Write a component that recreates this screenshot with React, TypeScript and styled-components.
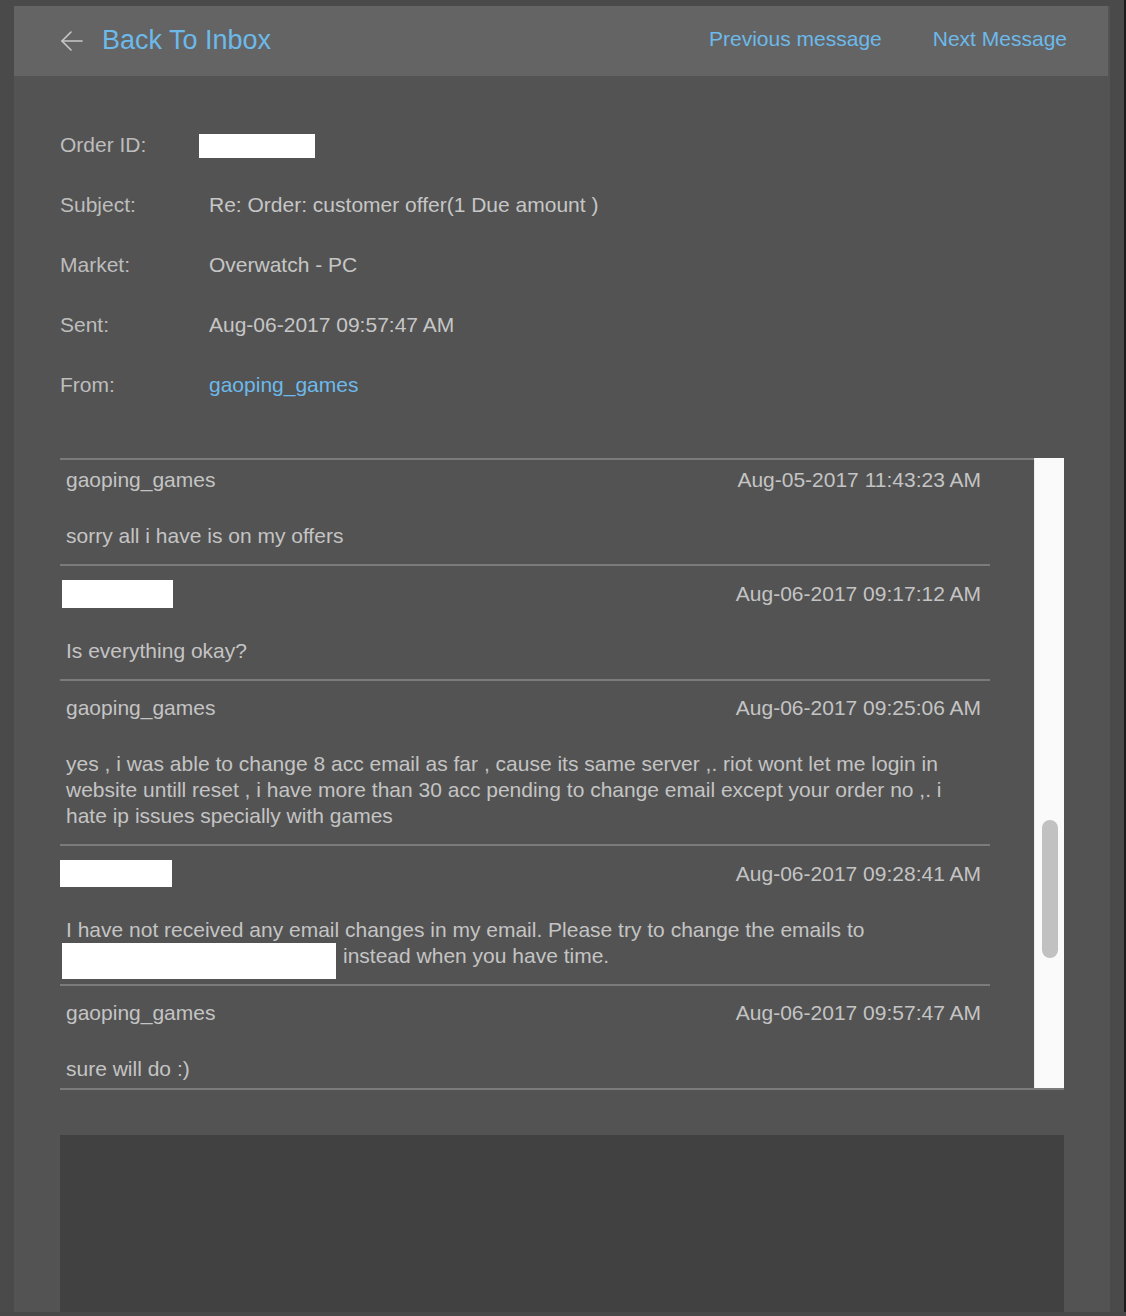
import React from "react";
import styled, { createGlobalStyle } from "styled-components";

const GlobalStyle = createGlobalStyle`
  html, body {
    margin: 0;
    padding: 0;
    background: #484848;
    overflow: hidden;
  }
  body {
    font-family: "Liberation Sans", Arial, Helvetica, sans-serif;
  }
`;

const Page = styled.div`
  height: 1312px;
  overflow: hidden;
  padding: 6px 14px 0 14px;
  border-right: 2px solid #1c1c1c;
  background: #4a4a4a;
  box-sizing: border-box;
`;

const Panel = styled.div`
  width: 1096px;
  min-height: 1400px;
  background: #535353;
`;

const TopBar = styled.div`
  height: 70px;
  margin-right: 2px;
  background: #646464;
  display: flex;
  align-items: center;
  padding: 0 41px 0 46px;
`;

const BackLink = styled.a`
  display: flex;
  align-items: center;
  gap: 18px;
  color: #6db9ea;
  font-size: 27px;
  text-decoration: none;
  cursor: pointer;
  padding-bottom: 1px;
`;

const NavLinks = styled.div`
  margin-left: auto;
  display: flex;
  gap: 51px;
  padding-bottom: 4px;
`;

const NavLink = styled.a`
  color: #6db9ea;
  font-size: 21px;
  cursor: pointer;
`;

const Body = styled.div`
  padding: 39px 46px 0 46px;
`;

const Details = styled.div`
  display: grid;
  grid-template-columns: 149px 1fr;
  grid-auto-rows: 60px;
  align-items: center;
  font-size: 21px;
`;

const Label = styled.div`
  color: #bdbdbd;
`;

const Value = styled.div<{ $link?: boolean }>`
  color: ${(p) => (p.$link ? "#6db9ea" : "#c6c6c6")};
`;

const Redacted = styled.span<{ $w: number; $h: number; $shift?: number }>`
  display: inline-block;
  width: ${(p) => p.$w}px;
  height: ${(p) => p.$h}px;
  margin-left: ${(p) => p.$shift || 0}px;
  background: #ffffff;
  vertical-align: middle;
`;

const InlineRedacted = styled.span`
  display: inline-block;
  width: 274px;
  height: 36px;
  margin: 0 7px -16px -4px;
  background: #ffffff;
`;

const Thread = styled.div`
  margin-top: 43px;
  display: flex;
  border-bottom: 2px solid #7b7b7b;
`;

const MessageColumn = styled.div`
  flex: 1;
  border-top: 2px solid #7b7b7b;
`;

const Viewport = styled.div`
  height: 628px;
  overflow: hidden;
`;

const Scrolled = styled.div<{ $offset: number }>`
  margin-top: -${(p) => p.$offset}px;
`;

const Message = styled.div`
  margin-right: 44px;
  padding: 14px 9px 15px 6px;
  border-bottom: 2px solid #7b7b7b;
  color: #c4c4c4;
  font-size: 21px;
  line-height: 26px;
`;

const MessageHead = styled.div`
  display: flex;
  justify-content: space-between;
  align-items: center;
  min-height: 26px;
`;

const MessageText = styled.div`
  margin-top: 30px;
  padding-right: 30px;
`;

const ScrollTrack = styled.div`
  width: 30px;
  height: 630px;
  background: #fafafa;
  border-left: 1px solid #ececec;
  box-sizing: border-box;
  display: flex;
  justify-content: center;
`;

const ScrollThumb = styled.div`
  width: 16px;
  height: 138px;
  margin-top: 362px;
  border-radius: 8px;
  background: #c1c1c1;
`;

const ReplyBox = styled.div`
  margin-top: 45px;
  height: 240px;
  background: #414141;
`;

const ArrowLeft = () => (
  <svg width="24" height="24" viewBox="0 0 24 24" fill="none" stroke="#c8c8c8" strokeWidth="1.6" strokeLinecap="round" strokeLinejoin="round">
    <path d="M22 12H2" />
    <path d="M11 3l-9 9 9 9" />
  </svg>
);

type Msg = {
  from: string | null;
  boxW?: number;
  boxH?: number;
  boxShift?: number;
  date: string;
  text: React.ReactNode;
};

const messages: Msg[] = [
  { from: "gaoping_games", date: "Aug-05-2017 11:43:23 AM", text: "sorry all i have is on my offers" },
  { from: null, boxW: 111, boxH: 28, boxShift: -4, date: "Aug-06-2017 09:17:12 AM", text: "Is everything okay?" },
  {
    from: "gaoping_games",
    date: "Aug-06-2017 09:25:06 AM",
    text:
      "yes , i was able to change 8 acc email as far , cause its same server ,. riot wont let me login in website untill reset , i have more than 30 acc pending to change email except your order no ,. i hate ip issues specially with games",
  },
  {
    from: null,
    boxW: 113,
    boxH: 27,
    boxShift: -7,
    date: "Aug-06-2017 09:28:41 AM",
    text: (
      <>
        I have not received any email changes in my email. Please try to change the emails to{" "}
        <InlineRedacted />
        instead when you have time.
      </>
    ),
  },
  { from: "gaoping_games", date: "Aug-06-2017 09:57:47 AM", text: "sure will do :)" },
];

export default function App() {
  return (
    <>
      <GlobalStyle />
      <Page>
        <Panel>
          <TopBar>
            <BackLink>
              <ArrowLeft />
              Back To Inbox
            </BackLink>
            <NavLinks>
              <NavLink>Previous message</NavLink>
              <NavLink>Next Message</NavLink>
            </NavLinks>
          </TopBar>
          <Body>
            <Details>
              <Label>Order ID:</Label>
              <Value>
                <Redacted $w={116} $h={24} $shift={-10} />
              </Value>
              <Label>Subject:</Label>
              <Value>Re: Order: customer offer(1 Due amount )</Value>
              <Label>Market:</Label>
              <Value>Overwatch - PC</Value>
              <Label>Sent:</Label>
              <Value>Aug-06-2017 09:57:47 AM</Value>
              <Label>From:</Label>
              <Value $link>gaoping_games</Value>
            </Details>

            <Thread>
              <MessageColumn>
                <Viewport>
                  <Scrolled $offset={7}>
                    {messages.map((m, i) => (
                      <Message key={i}>
                        <MessageHead>
                          {m.from ? (
                            <span>{m.from}</span>
                          ) : (
                            <Redacted $w={m.boxW || 110} $h={m.boxH || 28} $shift={m.boxShift} />
                          )}
                          <span>{m.date}</span>
                        </MessageHead>
                        <MessageText>{m.text}</MessageText>
                      </Message>
                    ))}
                  </Scrolled>
                </Viewport>
              </MessageColumn>
              <ScrollTrack>
                <ScrollThumb />
              </ScrollTrack>
            </Thread>

            <ReplyBox />
          </Body>
        </Panel>
      </Page>
    </>
  );
}
